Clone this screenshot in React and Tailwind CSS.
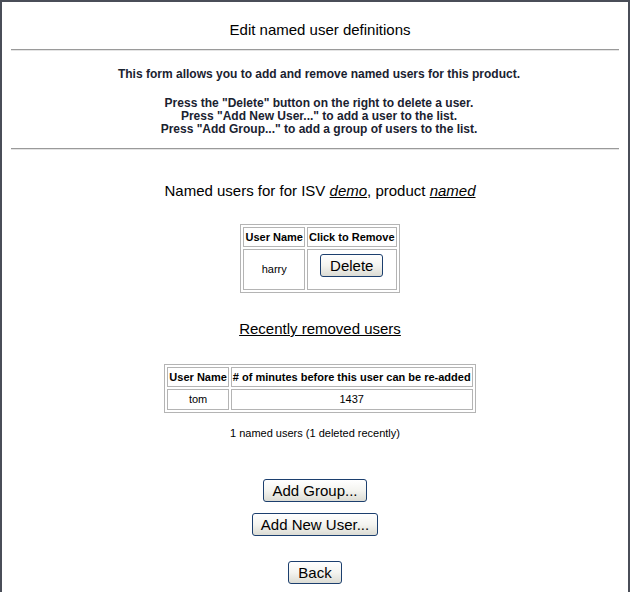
import React from 'react';

const Button = ({ children, className = '' }) => (
  <button
    type="button"
    className={`rounded-[3px] border border-[#1c3f6e] bg-gradient-to-b from-white via-[#f4f4f0] to-[#dcdcd4] px-[8px] text-[15px] leading-[21px] text-black ${className}`}
  >
    {children}
  </button>
);

const cell = 'border border-[#b4b4b4]';

const App = () => {
  return (
    <div className="w-[630px] h-[592px] overflow-hidden bg-white font-['Liberation_Sans',Arial,sans-serif] text-black">
      <div className="h-[620px] border-x-2 border-t-2 border-[#4a4e58]">
        {/* Title */}
        <h1 className="pl-[10px] pt-[19px] text-center text-[15px] leading-[17px]">Edit named user definitions</h1>
        <hr className="mx-[9px] mt-[11px] border-t border-b border-t-[#9a9a9a] border-b-[#e4e4e4]" />

        {/* Instructions */}
        <div className="mt-[17px] pl-[8px] text-center text-[12px] leading-[13px] font-bold text-[#1a2230]">
          <p>This form allows you to add and remove named users for this product.</p>
          <p className="mt-[16px]">
            Press the "Delete" button on the right to delete a user.
            <br />
            Press "Add New User..." to add a user to the list.
            <br />
            Press "Add Group..." to add a group of users to the list.
          </p>
        </div>
        <hr className="mx-[9px] mt-[12px] border-t border-b border-t-[#9a9a9a] border-b-[#e4e4e4]" />

        <div className="pl-[10px]">
          {/* Named users */}
          <h2 className="mt-[32px] text-center text-[15px] leading-[18px]">
            Named users for for ISV <i className="underline">demo</i>, product <i className="underline">named</i>
          </h2>

          <table className="mx-auto mt-[24px] border-separate border-spacing-[2px] border border-[#b4b4b4] text-[11px]">
            <thead>
              <tr>
                <th className={`${cell} h-[20px] px-[1px] font-bold`}>User Name</th>
                <th className={`${cell} h-[20px] px-[1px] font-bold`}>Click to Remove</th>
              </tr>
            </thead>
            <tbody>
              <tr>
                <td className={`${cell} text-center align-middle`}>harry</td>
                <td className={`${cell} pt-[4px] pb-[12px] text-center`}>
                  <Button className="px-[9px]">Delete</Button>
                </td>
              </tr>
            </tbody>
          </table>

          {/* Recently removed */}
          <h2 className="mt-[27px] text-center text-[15px] leading-[18px] underline">Recently removed users</h2>

          <table className="mx-auto mt-[26px] border-separate border-spacing-[2px] border border-[#b4b4b4] text-[11px]">
            <thead>
              <tr>
                <th className={`${cell} h-[20px] px-[1px] font-bold`}>User Name</th>
                <th className={`${cell} h-[20px] px-[1px] font-bold`}># of minutes before this user can be re-added</th>
              </tr>
            </thead>
            <tbody>
              <tr>
                <td className={`${cell} h-[21px] text-center`}>tom</td>
                <td className={`${cell} h-[21px] text-center`}>1437</td>
              </tr>
            </tbody>
          </table>
        </div>

        <p className="mt-[14px] text-center text-[11px] leading-[13px]">1 named users (1 deleted recently)</p>

        {/* Actions */}
        <div className="mt-[39px] flex flex-col items-center">
          <Button>Add Group...</Button>
          <Button className="mt-[11px]">Add New User...</Button>
          <Button className="mt-[25px] px-[9px]">Back</Button>
        </div>
      </div>
    </div>
  );
};

export default App;
